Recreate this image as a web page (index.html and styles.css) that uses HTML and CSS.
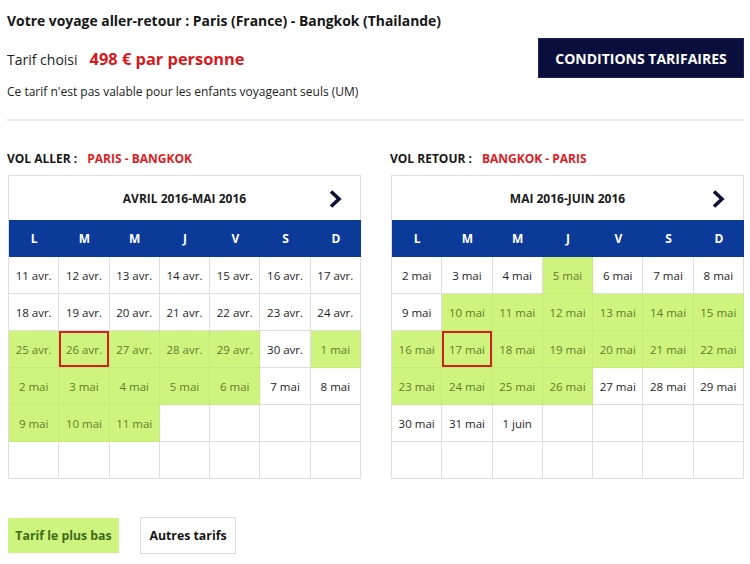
FILE: index.html
```html
<!DOCTYPE html>
<html lang="fr">
<head>
<meta charset="utf-8">
<title>Votre voyage</title>
<link rel="stylesheet" href="styles.css">
</head>
<body>
<div class="page">
  <h1 class="title">Votre voyage aller-retour : Paris (France) - Bangkok (Thailande)</h1>
  <div class="fare-row">
    <div class="fare"><span class="fare-label">Tarif choisi</span><span class="fare-price">498 € par personne</span></div>
    <button class="btn-conditions">CONDITIONS TARIFAIRES</button>
  </div>
  <p class="notice">Ce tarif n'est pas valable pour les enfants voyageant seuls (UM)</p>
  <hr class="divider">
  <div class="flights">
    <div class="flight">
      <div class="flight-label">VOL ALLER :<span class="route">PARIS - BANGKOK</span></div>
      <div class="calendar">
        <div class="cal-head">
          <span class="cal-title">AVRIL 2016-MAI 2016</span>
          <svg class="cal-next" width="14" height="20" viewBox="0 0 14 20"><polyline points="3,2.5 11,10 3,17.5" fill="none" stroke="#0d1233" stroke-width="3.6"/></svg>
        </div>
        <div class="days"><span>L</span><span>M</span><span>M</span><span>J</span><span>V</span><span>S</span><span>D</span></div>
        <div class="grid">
          <div class="c">11 avr.</div><div class="c">12 avr.</div><div class="c">13 avr.</div><div class="c">14 avr.</div><div class="c">15 avr.</div><div class="c">16 avr.</div><div class="c">17 avr.</div>
          <div class="c">18 avr.</div><div class="c">19 avr.</div><div class="c">20 avr.</div><div class="c">21 avr.</div><div class="c">22 avr.</div><div class="c">23 avr.</div><div class="c">24 avr.</div>
          <div class="c g">25 avr.</div><div class="c g sel">26 avr.</div><div class="c g">27 avr.</div><div class="c g">28 avr.</div><div class="c g">29 avr.</div><div class="c">30 avr.</div><div class="c g">1 mai</div>
          <div class="c g">2 mai</div><div class="c g">3 mai</div><div class="c g">4 mai</div><div class="c g">5 mai</div><div class="c g">6 mai</div><div class="c">7 mai</div><div class="c">8 mai</div>
          <div class="c g">9 mai</div><div class="c g">10 mai</div><div class="c g">11 mai</div><div class="c"></div><div class="c"></div><div class="c"></div><div class="c"></div>
          <div class="c"></div><div class="c"></div><div class="c"></div><div class="c"></div><div class="c"></div><div class="c"></div><div class="c"></div>
        </div>
      </div>
    </div>
    <div class="flight">
      <div class="flight-label">VOL RETOUR :<span class="route">BANGKOK - PARIS</span></div>
      <div class="calendar">
        <div class="cal-head">
          <span class="cal-title">MAI 2016-JUIN 2016</span>
          <svg class="cal-next" width="14" height="20" viewBox="0 0 14 20"><polyline points="3,2.5 11,10 3,17.5" fill="none" stroke="#0d1233" stroke-width="3.6"/></svg>
        </div>
        <div class="days"><span>L</span><span>M</span><span>M</span><span>J</span><span>V</span><span>S</span><span>D</span></div>
        <div class="grid">
          <div class="c">2 mai</div><div class="c">3 mai</div><div class="c">4 mai</div><div class="c g">5 mai</div><div class="c">6 mai</div><div class="c">7 mai</div><div class="c">8 mai</div>
          <div class="c">9 mai</div><div class="c g">10 mai</div><div class="c g">11 mai</div><div class="c g">12 mai</div><div class="c g">13 mai</div><div class="c g">14 mai</div><div class="c g">15 mai</div>
          <div class="c g">16 mai</div><div class="c g sel">17 mai</div><div class="c g">18 mai</div><div class="c g">19 mai</div><div class="c g">20 mai</div><div class="c g">21 mai</div><div class="c g">22 mai</div>
          <div class="c g">23 mai</div><div class="c g">24 mai</div><div class="c g">25 mai</div><div class="c g">26 mai</div><div class="c">27 mai</div><div class="c">28 mai</div><div class="c">29 mai</div>
          <div class="c">30 mai</div><div class="c">31 mai</div><div class="c">1 juin</div><div class="c"></div><div class="c"></div><div class="c"></div><div class="c"></div>
          <div class="c"></div><div class="c"></div><div class="c"></div><div class="c"></div><div class="c"></div><div class="c"></div><div class="c"></div>
        </div>
      </div>
    </div>
  </div>
  <div class="tabs">
    <button class="tab tab-active">Tarif le plus bas</button>
    <button class="tab tab-other">Autres tarifs</button>
  </div>
</div>
</body>
</html>
```

FILE: styles.css
```css
* { box-sizing: border-box; }
html, body { margin: 0; padding: 0; background: #fff; }
body { font-family: "Open Sans", "Noto Sans", sans-serif; color: #1e1e1e; }
.page { width: 750px; padding: 0 6px 0 7px; }
.title { font-size: 13.9px; font-weight: 700; line-height: 20px; margin: 11px 0 0; color: #161616; }
.fare-row { display: flex; justify-content: space-between; align-items: center; margin-top: 7px; height: 40px; }
.fare { display: flex; align-items: baseline; }
.fare-label { font-size: 14px; color: #222; }
.fare-price { font-size: 16.4px; font-weight: 700; color: #d8191c; margin-left: 12px; }
.btn-conditions { width: 206px; height: 40px; background: #0a0e3c; color: #fff; border: 1px solid #1c2252; font-family: inherit; font-size: 14px; font-weight: 700; letter-spacing: 0; padding: 0; }
.notice { font-size: 12px; line-height: 18px; margin: 5px 0 0; color: #222; }
.divider { border: 0; border-top: 2px solid #ececec; margin: 18px 0 0; width: 737px; }
.flights { display: flex; gap: 29px; margin-top: 30px; }
.flight { width: 354px; }
.flight-label { font-size: 12px; font-weight: 700; line-height: 16px; color: #161616; }
.route { color: #dd1c1f; margin-left: 10px; }
.calendar { margin-top: 8px; margin-left: 1px; width: 353px; border: 1px solid #dedede; border-bottom: 0; border-right: 0; }
.cal-head { position: relative; height: 44px; display: flex; align-items: center; justify-content: center; border-right: 1px solid #dedede; }
.cal-title { font-size: 12px; font-weight: 700; color: #1a1a1a; }
.cal-next { position: absolute; right: 18px; top: 13px; }
.days { display: grid; grid-template-columns: repeat(7, 1fr); height: 37px; background: #0b3a98; align-items: center; }
.days span { text-align: center; color: #fff; font-size: 12px; font-weight: 700; }
.grid { display: grid; grid-template-columns: repeat(7, 1fr); grid-auto-rows: 37px; }
.c { display: flex; align-items: center; justify-content: center; font-size: 11.5px; color: #1e1e1e; border-right: 1px solid #dedede; border-bottom: 1px solid #dedede; }
.c.g { background: #cff47e; color: #5f7d2a; border-color: #c6ea78; }
.c.sel { box-shadow: inset 0 0 0 2px #d21f1f; }
.tabs { display: flex; gap: 21px; margin-top: 38px; align-items: flex-start; padding-left: 1px; }
.tab { font-family: inherit; font-size: 12.3px; font-weight: 700; padding: 0; }
.tab-active { width: 111px; height: 35px; background: #cdf47e; color: #3f6b16; border: 0; margin-top: 1px; }
.tab-other { width: 96px; height: 37px; background: #fff; color: #161616; border: 1px solid #dcdcdc; }
```
